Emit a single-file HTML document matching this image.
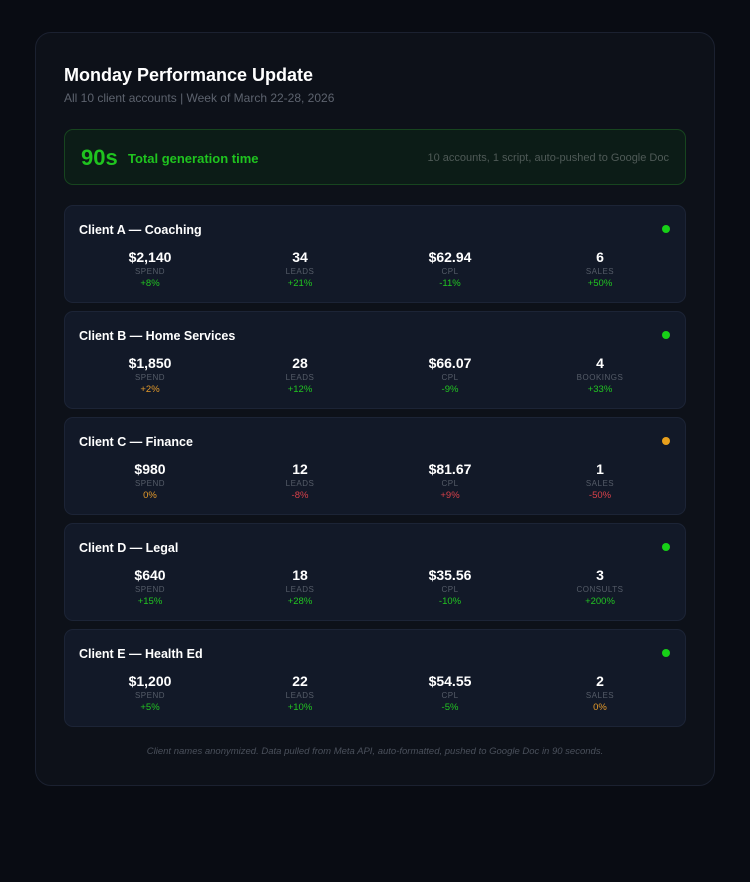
<!DOCTYPE html>
<html><head><meta charset="utf-8"><style>
*{margin:0;padding:0;box-sizing:border-box}
body{width:750px;height:882px;background:#090c13;font-family:"Liberation Sans",sans-serif;color:#fff;position:relative;overflow:hidden}
.wrap{position:absolute;left:35px;top:32px;width:680px;height:754px;background:#0d1119;border:1px solid #1b2130;border-radius:16px}
h1{position:absolute;left:28px;top:31px;font-size:18px;font-weight:bold;line-height:22px}
.sub{position:absolute;left:28px;top:58px;font-size:12px;color:#5d636e}
.gen{position:absolute;left:28px;top:96px;width:622px;height:56px;border:1px solid #17451f;border-radius:9px;background:#0c1c17}
.gen .big{position:absolute;left:16px;top:15px;font-size:22px;font-weight:bold;color:#1fc41f}
.gen .t{position:absolute;left:63px;top:21px;font-size:13px;font-weight:bold;color:#1fc41f}
.gen .r{position:absolute;right:16px;top:22px;font-size:11px;color:#4f5a57}
.card{position:absolute;left:28px;width:622px;height:98px;background:#121928;border:1px solid #1c2436;border-radius:9px}
.card .n{position:absolute;left:14px;top:17px;font-size:12.5px;font-weight:bold}
.dot{position:absolute;right:15px;top:19px;width:8px;height:8px;border-radius:50%;background:#17d017}
.col{position:absolute;top:43px;width:150px;text-align:center}
.v{font-size:14px;font-weight:bold;line-height:17px}
.l{font-size:8px;color:#555c68;letter-spacing:.5px;margin-top:1px;line-height:10px}
.c{font-size:9.5px;line-height:13px}
.g{color:#22c422}.o{color:#e49a2a}.rd{color:#d9414a}
.foot{position:absolute;left:0;width:678px;top:713px;text-align:center;font-size:9.5px;font-style:italic;color:#4a505b}
</style></head><body><div class="wrap">
<h1>Monday Performance Update</h1>
<div class="sub">All 10 client accounts | Week of March 22-28, 2026</div>
<div class="gen"><div class="big">90s</div><div class="t">Total generation time</div><div class="r">10 accounts, 1 script, auto-pushed to Google Doc</div></div>

<div class="card" style="top:172px"><div class="n">Client A — Coaching</div><div class="dot"></div>
<div class="col" style="left:10px"><div class="v">$2,140</div><div class="l">SPEND</div><div class="c g">+8%</div></div>
<div class="col" style="left:160px"><div class="v">34</div><div class="l">LEADS</div><div class="c g">+21%</div></div>
<div class="col" style="left:310px"><div class="v">$62.94</div><div class="l">CPL</div><div class="c g">-11%</div></div>
<div class="col" style="left:460px"><div class="v">6</div><div class="l">SALES</div><div class="c g">+50%</div></div></div>

<div class="card" style="top:278px"><div class="n">Client B — Home Services</div><div class="dot"></div>
<div class="col" style="left:10px"><div class="v">$1,850</div><div class="l">SPEND</div><div class="c o">+2%</div></div>
<div class="col" style="left:160px"><div class="v">28</div><div class="l">LEADS</div><div class="c g">+12%</div></div>
<div class="col" style="left:310px"><div class="v">$66.07</div><div class="l">CPL</div><div class="c g">-9%</div></div>
<div class="col" style="left:460px"><div class="v">4</div><div class="l">BOOKINGS</div><div class="c g">+33%</div></div></div>

<div class="card" style="top:384px"><div class="n">Client C — Finance</div><div class="dot" style="background:#e8a01c"></div>
<div class="col" style="left:10px"><div class="v">$980</div><div class="l">SPEND</div><div class="c o">0%</div></div>
<div class="col" style="left:160px"><div class="v">12</div><div class="l">LEADS</div><div class="c rd">-8%</div></div>
<div class="col" style="left:310px"><div class="v">$81.67</div><div class="l">CPL</div><div class="c rd">+9%</div></div>
<div class="col" style="left:460px"><div class="v">1</div><div class="l">SALES</div><div class="c rd">-50%</div></div></div>

<div class="card" style="top:490px"><div class="n">Client D — Legal</div><div class="dot"></div>
<div class="col" style="left:10px"><div class="v">$640</div><div class="l">SPEND</div><div class="c g">+15%</div></div>
<div class="col" style="left:160px"><div class="v">18</div><div class="l">LEADS</div><div class="c g">+28%</div></div>
<div class="col" style="left:310px"><div class="v">$35.56</div><div class="l">CPL</div><div class="c g">-10%</div></div>
<div class="col" style="left:460px"><div class="v">3</div><div class="l">CONSULTS</div><div class="c g">+200%</div></div></div>

<div class="card" style="top:596px"><div class="n">Client E — Health Ed</div><div class="dot"></div>
<div class="col" style="left:10px"><div class="v">$1,200</div><div class="l">SPEND</div><div class="c g">+5%</div></div>
<div class="col" style="left:160px"><div class="v">22</div><div class="l">LEADS</div><div class="c g">+10%</div></div>
<div class="col" style="left:310px"><div class="v">$54.55</div><div class="l">CPL</div><div class="c g">-5%</div></div>
<div class="col" style="left:460px"><div class="v">2</div><div class="l">SALES</div><div class="c o">0%</div></div></div>

<div class="foot">Client names anonymized. Data pulled from Meta API, auto-formatted, pushed to Google Doc in 90 seconds.</div>
</div></body></html>
